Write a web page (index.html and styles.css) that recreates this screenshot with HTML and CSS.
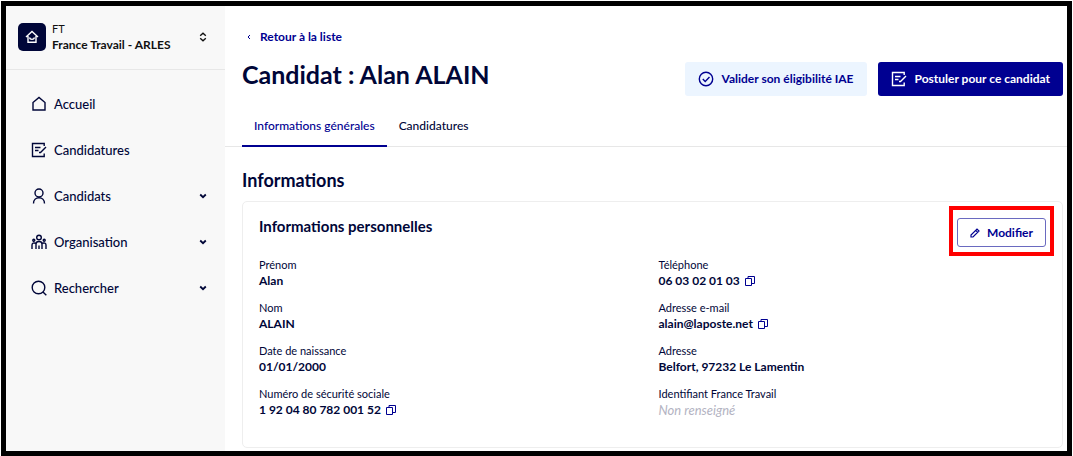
FILE: index.html
```html
<!DOCTYPE html>
<html lang="fr">
<head>
    <meta charset="UTF-8">
    <meta name="viewport" content="width=device-width, initial-scale=1.0">
    <title>Candidat : Alan ALAIN</title>
    <link rel="stylesheet" href="styles.css">
</head>
<body>
    <!-- shared icons -->
    <svg class="sprite" aria-hidden="true">
        <symbol id="icon-edit-box" viewBox="0 0 16 16">
            <path d="M13.200 4V1.500H1.500V14.500H13.200V11.500M4 5.500H9.500M4 8.500H7.500M15 5L9.500 10.500H8"/>
        </symbol>
        <symbol id="icon-chevron" viewBox="0 0 8 8">
            <path d="M1.200 2.500L4 5.200L6.800 2.500"/>
        </symbol>
        <symbol id="icon-copy" viewBox="0 0 10 10">
            <path d="M3 2.500V.500H9.500V7.500H7M.500 2.500H6.500V9.500H.500Z"/>
        </symbol>
    </svg>

    <div class="page">
        <aside class="sidebar">
            <button type="button" class="structure">
                <span class="structure-logo">
                    <svg viewBox="0 0 14 14"><path d="M1 7L7 1.500L13 7M3 6V12.300H11V6M4.500 7.500C5 10 9 10 9.500 7.500"/></svg>
                </span>
                <span class="structure-name">
                    <span>FT</span>
                    <strong>France Travail - ARLES</strong>
                </span>
                <svg class="structure-arrows" viewBox="0 0 8 10"><path d="M1.200 3.700L4 1.200L6.800 3.700M1.200 6.300L4 8.800L6.800 6.300"/></svg>
            </button>
            <nav class="menu">
                <a href="#" class="menu-item">
                    <svg class="icon" viewBox="0 0 16 16"><path d="M2 6.500L8 1.500L14 6.500V14H2Z"/></svg>
                    <span>Accueil</span>
                </a>
                <a href="#" class="menu-item">
                    <svg class="icon"><use href="#icon-edit-box"/></svg>
                    <span>Candidatures</span>
                </a>
                <button type="button" class="menu-item">
                    <svg class="icon" viewBox="0 0 16 16"><circle cx="8" cy="5" r="4"/><path d="M2.500 15.500C2.500 12 5 9.700 8 9.700S13.500 12 13.500 15.500"/></svg>
                    <span>Candidats</span>
                    <svg class="chevron"><use href="#icon-chevron"/></svg>
                </button>
                <button type="button" class="menu-item">
                    <svg class="icon" viewBox="0 0 16 16"><circle cx="8" cy="3.500" r="2.300"/><circle cx="2.800" cy="6.200" r="1"/><circle cx="13.200" cy="6.200" r="1"/><path d="M5 15V10C5 6.700 11 6.700 11 10V15M8 11.500V15M1 15V11C1 9 2.500 8.700 5 9.300M15 15V11C15 9 13.500 8.700 11 9.300"/></svg>
                    <span>Organisation</span>
                    <svg class="chevron"><use href="#icon-chevron"/></svg>
                </button>
                <button type="button" class="menu-item">
                    <svg class="icon" viewBox="0 0 16 16"><circle cx="7.500" cy="7.500" r="6.300"/><path d="M12 12L15.300 15.300"/></svg>
                    <span>Rechercher</span>
                    <svg class="chevron"><use href="#icon-chevron"/></svg>
                </button>
            </nav>
        </aside>

        <main class="main">
            <header class="header">
                <a href="#" class="back">
                    <svg viewBox="0 0 4 6"><path d="M3 1L1 3L3 5"/></svg>
                    Retour à la liste
                </a>
                <div class="title-row">
                    <h1>Candidat : Alan ALAIN</h1>
                    <div class="actions">
                        <button type="button" class="btn btn-light">
                            <svg class="icon" viewBox="0 0 16 16"><circle cx="8" cy="8" r="6.700"/><path d="M4.800 8L7.200 10.400L11.500 6"/></svg>
                            Valider son éligibilité IAE
                        </button>
                        <button type="button" class="btn btn-primary">
                            <svg class="icon"><use href="#icon-edit-box"/></svg>
                            Postuler pour ce candidat
                        </button>
                    </div>
                </div>
            </header>

            <nav class="tabs">
                <a href="#" class="tab active">Informations générales</a>
                <a href="#" class="tab">Candidatures</a>
            </nav>

            <section class="content">
                <h2>Informations</h2>
                <div class="card">
                    <div class="card-header">
                        <h3>Informations personnelles</h3>
                        <div class="highlight">
                            <button type="button" class="btn-outline">
                                <svg viewBox="0 0 10 10"><path d="M1 9V7L7 1L9 3L3 9ZM5.700 2.300L7.700 4.300"/></svg>
                                Modifier
                            </button>
                        </div>
                    </div>
                    <div class="columns">
                        <dl>
                            <div>
                                <dt>Prénom</dt>
                                <dd>Alan</dd>
                            </div>
                            <div>
                                <dt>Nom</dt>
                                <dd>ALAIN</dd>
                            </div>
                            <div>
                                <dt>Date de naissance</dt>
                                <dd>01/01/2000</dd>
                            </div>
                            <div>
                                <dt>Numéro de sécurité sociale</dt>
                                <dd>1 92 04 80 782 001 52 <button type="button" class="copy" aria-label="Copier le numéro"><svg><use href="#icon-copy"/></svg></button></dd>
                            </div>
                        </dl>
                        <dl>
                            <div>
                                <dt>Téléphone</dt>
                                <dd>06 03 02 01 03 <button type="button" class="copy" aria-label="Copier le téléphone"><svg><use href="#icon-copy"/></svg></button></dd>
                            </div>
                            <div>
                                <dt>Adresse e-mail</dt>
                                <dd>alain@laposte.net <button type="button" class="copy" aria-label="Copier l'adresse e-mail"><svg><use href="#icon-copy"/></svg></button></dd>
                            </div>
                            <div>
                                <dt>Adresse</dt>
                                <dd>Belfort, 97232 Le Lamentin</dd>
                            </div>
                            <div>
                                <dt>Identifiant France Travail</dt>
                                <dd class="empty">Non renseigné</dd>
                            </div>
                        </dl>
                    </div>
                </div>
            </section>
        </main>
    </div>
</body>
</html>
```
FILE: styles.css
```css
* {
    box-sizing: border-box;
}
body {
    margin: 0;
    padding: 1px;
    background-color: #fff;
    color: #000638;
    font-family: Lato, "Open Sans", sans-serif;
    font-size: 13px;
    line-height: 16px;
}
h1, h2, h3, dl, dd {
    margin: 0;
}
a {
    color: inherit;
    text-decoration: none;
}
button {
    padding: 0;
    border: none;
    background: none;
    color: inherit;
    font: inherit;
    cursor: pointer;
}
svg {
    flex: none;
    fill: none;
    stroke: currentColor;
    stroke-width: 1.4;
}
.sprite {
    display: none;
}
.icon {
    width: 16px;
    height: 16px;
}
.page {
    display: flex;
    min-height: calc(100vh - 2px);
    border: 5px solid #000;
}

/* sidebar */
.sidebar {
    flex: none;
    width: 219px;
    background-color: #f8f8f8;
}
.structure {
    display: flex;
    align-items: center;
    gap: 6px;
    width: 100%;
    height: 64px;
    padding: 0 18px 2px 12px;
    border-bottom: 1px solid #e7e7e7;
    text-align: left;
    color: #111;
}
.structure-logo {
    display: flex;
    align-items: center;
    justify-content: center;
    width: 28px;
    height: 28px;
    border-radius: 5px;
    background-color: #000638;
    color: #fff;
}
.structure-logo svg {
    width: 14px;
    height: 14px;
}
.structure-name {
    display: flex;
    flex: 1;
    flex-direction: column;
    font-size: 12px;
    white-space: nowrap;
}
.structure-name span {
    font-size: 11px;
}
.structure-arrows {
    width: 8px;
    height: 10px;
}
.menu {
    display: flex;
    flex-direction: column;
    padding: 11px 18px 0 25px;
}
.menu-item {
    display: flex;
    align-items: center;
    gap: 7px;
    height: 46px;
    text-align: left;
    font-weight: 500;
}
.menu-item span {
    flex: 1;
}
.chevron {
    width: 8px;
    height: 8px;
    stroke-width: 1.8;
}

/* main */
.main {
    flex: 1;
    min-width: 0;
}
.header {
    padding: 23px 4px 0 17px;
}
.back {
    display: flex;
    align-items: center;
    gap: 9px;
    width: fit-content;
    padding-left: 5px;
    color: #000091;
    font-size: 12px;
    font-weight: bold;
}
.back svg {
    width: 4px;
    height: 6px;
    stroke-width: 1;
}
.title-row {
    display: flex;
    justify-content: space-between;
    margin-top: 13px;
}
h1 {
    font-size: 25px;
    line-height: 32px;
}
.actions {
    display: flex;
    gap: 11px;
    padding-top: 4px;
}
.btn {
    display: flex;
    align-items: center;
    gap: 8px;
    height: 34px;
    padding: 0 13px;
    border-radius: 3px;
    font-size: 12px;
    font-weight: bold;
    white-space: nowrap;
}
.btn-light {
    background-color: #ecf5ff;
    color: #000091;
}
.btn-primary {
    background-color: #000091;
    color: #fff;
}
.tabs {
    display: flex;
    padding-left: 17px;
    margin-top: 9px;
    border-bottom: 1px solid #e7e7e7;
}
.tab {
    padding: 13px 12px 11px;
    margin-bottom: -1px;
    border-bottom: 2px solid transparent;
    font-size: 12px;
    font-weight: 500;
}
.tab.active {
    border-color: #000091;
    color: #000091;
}
.content {
    padding: 22px 4px 3px 17px;
}
h2 {
    font-size: 18px;
    line-height: 22px;
}
.card {
    margin-top: 10px;
    padding: 16px 16px 29px;
    border: 1px solid #eee;
    border-radius: 5px;
}
.card-header {
    display: flex;
    align-items: flex-start;
    justify-content: space-between;
    margin-bottom: 10px;
}
h3 {
    font-size: 15px;
    line-height: 16px;
}
.highlight {
    position: relative;
}
/* red frame around the edit button */
.highlight::after {
    content: "";
    position: absolute;
    inset: -12px -8px -9px;
    border: 4px solid #f00;
    pointer-events: none;
}
.btn-outline {
    display: flex;
    align-items: center;
    gap: 7px;
    height: 29px;
    padding: 0 12px;
    border: 1px solid #6a6ac0;
    border-radius: 3px;
    color: #000091;
    font-size: 12px;
    font-weight: bold;
}
.btn-outline svg {
    width: 10px;
    height: 10px;
    stroke-width: 1.2;
}
.columns {
    display: grid;
    grid-template-columns: 1fr 1fr;
    gap: 12px;
}
dl {
    display: flex;
    flex-direction: column;
    gap: 11px;
}
dt {
    font-size: 11px;
}
dd {
    display: flex;
    align-items: center;
    gap: 5px;
    height: 16px;
    font-size: 12px;
    font-weight: bold;
}
.copy {
    display: flex;
    color: #000091;
}
.copy svg {
    width: 10px;
    height: 10px;
    stroke-width: 1;
}
.empty {
    color: #b3b3c2;
    font-size: 13px;
    font-style: italic;
    font-weight: normal;
}
```
